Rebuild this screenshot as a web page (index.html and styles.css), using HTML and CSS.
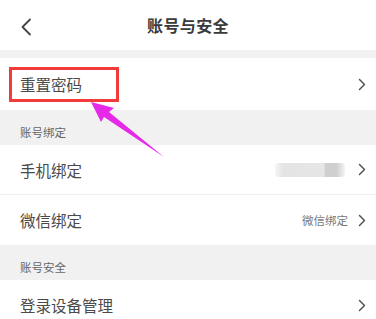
FILE: index.html
```html
<!DOCTYPE html>
<html lang="zh">
<head>
<meta charset="utf-8">
<link rel="stylesheet" href="styles.css">
</head>
<body>
<div class="page">
  <header class="topbar">
    <svg class="back" width="12" height="18" viewBox="0 0 12 18"><path d="M10 1.5 L2.5 9 L10 16.5" fill="none" stroke="#444" stroke-width="1.8" stroke-linecap="round" stroke-linejoin="round"/></svg>
    <div class="title">账号与安全</div>
  </header>
  <div class="gap"></div>
  <div class="row row-first">
    <span class="label boxed">重置密码</span>
    <span class="right"><svg class="chev" width="8" height="13" viewBox="0 0 8 13"><path d="M1.5 1.5 L6.5 6.5 L1.5 11.5" fill="none" stroke="#555" stroke-width="1.5" stroke-linecap="round" stroke-linejoin="round"/></svg></span>
  </div>
  <div class="section">账号绑定</div>
  <div class="row divided">
    <span class="label">手机绑定</span>
    <span class="right"><span class="blur"></span><svg class="chev" width="8" height="13" viewBox="0 0 8 13"><path d="M1.5 1.5 L6.5 6.5 L1.5 11.5" fill="none" stroke="#555" stroke-width="1.5" stroke-linecap="round" stroke-linejoin="round"/></svg></span>
  </div>
  <div class="row">
    <span class="label">微信绑定</span>
    <span class="right"><span class="value">微信绑定</span><svg class="chev" width="8" height="13" viewBox="0 0 8 13"><path d="M1.5 1.5 L6.5 6.5 L1.5 11.5" fill="none" stroke="#555" stroke-width="1.5" stroke-linecap="round" stroke-linejoin="round"/></svg></span>
  </div>
  <div class="section">账号安全</div>
  <div class="row">
    <span class="label">登录设备管理</span>
    <span class="right"><svg class="chev" width="8" height="13" viewBox="0 0 8 13"><path d="M1.5 1.5 L6.5 6.5 L1.5 11.5" fill="none" stroke="#555" stroke-width="1.5" stroke-linecap="round" stroke-linejoin="round"/></svg></span>
  </div>
  <svg class="arrow" width="376" height="319" viewBox="0 0 376 319"><path d="M91 102 L114 108 L109 112 L164 157 L104 117 L101 122 Z" fill="#e629e6"/></svg>
</div>
</body>
</html>
```
FILE: styles.css
```css
* { box-sizing: border-box; }
html, body { margin: 0; padding: 0; }
body {
  width: 376px;
  height: 319px;
  overflow: hidden;
  background: #fff;
  font-family: "Noto Sans CJK SC", "Noto Sans", sans-serif;
  color: #444;
}
.page { position: relative; width: 376px; height: 319px; }
.topbar {
  height: 50px;
  display: flex;
  align-items: center;
  justify-content: center;
  position: relative;
  background: #fff;
}
.back { position: absolute; left: 20px; top: 18px; }
.title {
  font-size: 16px;
  font-weight: 700;
  color: #3a3a3a;
  letter-spacing: 0.4px;
}
.gap { height: 8px; background: #f1f1f1; }
.row {
  height: 50px;
  display: flex;
  align-items: center;
  justify-content: space-between;
  padding: 0 10px 0 20px;
  background: #fff;
}
.row-first { height: 52px; }
.divided { border-bottom: 1px solid #efefef; }
.label { font-size: 15.5px; color: #4a4a4a; }
.boxed {
  position: relative;
}
.boxed::before {
  content: "";
  box-sizing: border-box;
  position: absolute;
  left: -11px;
  top: -6px;
  width: 110px;
  height: 35px;
  border: 3px solid #f23a3a;
}
.right { display: flex; align-items: center; }
.chev { display: block; margin-left: 10px; }
.value { font-size: 11.5px; color: #777; }
.blur {
  display: block;
  width: 70px;
  height: 14px;
  margin-right: 3px;
  border-radius: 4px;
  background: linear-gradient(90deg, #f6f6f6 0%, #e4e4e4 12%, #e6e6e6 70%, #cfcfcf 72%, #cfcfcf 88%, #f4f4f4 100%);
}
.section {
  height: 35px;
  background: #f1f1f1;
  font-size: 11.5px;
  color: #666;
  padding: 15px 0 0 20px;
  line-height: 14px;
}
.arrow { position: absolute; left: 0; top: 0; pointer-events: none; }
```
